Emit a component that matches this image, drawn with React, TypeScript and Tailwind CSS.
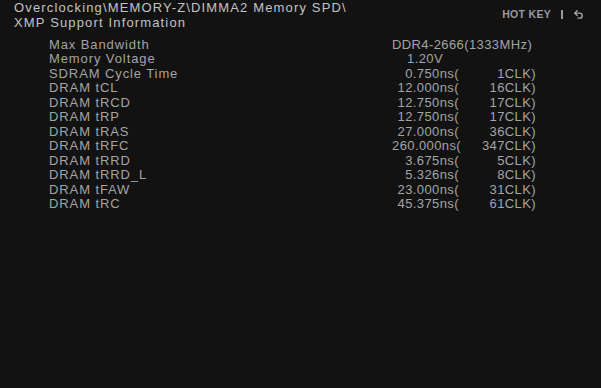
import React from "react";

const rows: { label: string; kind: "text" | "ns"; a: string; b?: string; indent?: number }[] = [
  { label: "Max Bandwidth", kind: "text", a: "DDR4-2666(1333MHz)", indent: 0 },
  { label: "Memory Voltage", kind: "text", a: "1.20V", indent: 15 },
  { label: "SDRAM Cycle Time", kind: "ns", a: "0.750ns(", b: "1CLK)" },
  { label: "DRAM tCL", kind: "ns", a: "12.000ns(", b: "16CLK)" },
  { label: "DRAM tRCD", kind: "ns", a: "12.750ns(", b: "17CLK)" },
  { label: "DRAM tRP", kind: "ns", a: "12.750ns(", b: "17CLK)" },
  { label: "DRAM tRAS", kind: "ns", a: "27.000ns(", b: "36CLK)" },
  { label: "DRAM tRFC", kind: "ns", a: "260.000ns(", b: "347CLK)" },
  { label: "DRAM tRRD", kind: "ns", a: "3.675ns(", b: "5CLK)" },
  { label: "DRAM tRRD_L", kind: "ns", a: "5.326ns(", b: "8CLK)" },
  { label: "DRAM tFAW", kind: "ns", a: "23.000ns(", b: "31CLK)" },
  { label: "DRAM tRC", kind: "ns", a: "45.375ns(", b: "61CLK)" },
];

export default function App() {
  return (
    <div
      className="w-[601px] h-[388px] bg-[#121212] overflow-hidden relative"
      style={{ fontFamily: '"Liberation Sans", Arial, sans-serif' }}
    >
      <div className="flex justify-between">
        <div className="pl-[14px] text-[13px] leading-[15px] tracking-[1.15px] text-[#c2c2c2]">
          <div>Overclocking\MEMORY-Z\DIMMA2 Memory SPD\</div>
          <div>XMP Support Information</div>
        </div>
        <div className="flex items-center gap-[10px] pr-[17px] pt-[14px] h-[15px] text-[10.5px] font-bold text-[#9a9a9a] tracking-[0.3px]">
          <span>HOT KEY</span>
          <span className="w-[2px] h-[9px] bg-[#9a9a9a]" />
          <svg width="11" height="11" viewBox="0 0 24 24" fill="none" stroke="#a8a8a8" strokeWidth="3" strokeLinecap="round" strokeLinejoin="round">
            <path d="M9 14 4 9l5-5" />
            <path d="M4 9h10.5a5.5 5.5 0 0 1 5.5 5.5a5.5 5.5 0 0 1-5.5 5.5H11" />
          </svg>
        </div>
      </div>
      <div className="mt-[8px] pl-[49px] text-[13px] leading-[14.45px] tracking-[0.9px] text-[#a4a4a4]">
        {rows.map((r) => (
          <div key={r.label} className="flex">
            <div className="w-[343px]">{r.label}</div>
            <div className="tracking-[0.4px]">
              {r.kind === "text" ? (
                <div style={{ paddingLeft: r.indent }}>{r.a}</div>
              ) : (
                <div className="flex">
                  <div className="w-[67px] text-right">{r.a}</div>
                  <div className="w-[77px] text-right">{r.b}</div>
                </div>
              )}
            </div>
          </div>
        ))}
      </div>
    </div>
  );
}
